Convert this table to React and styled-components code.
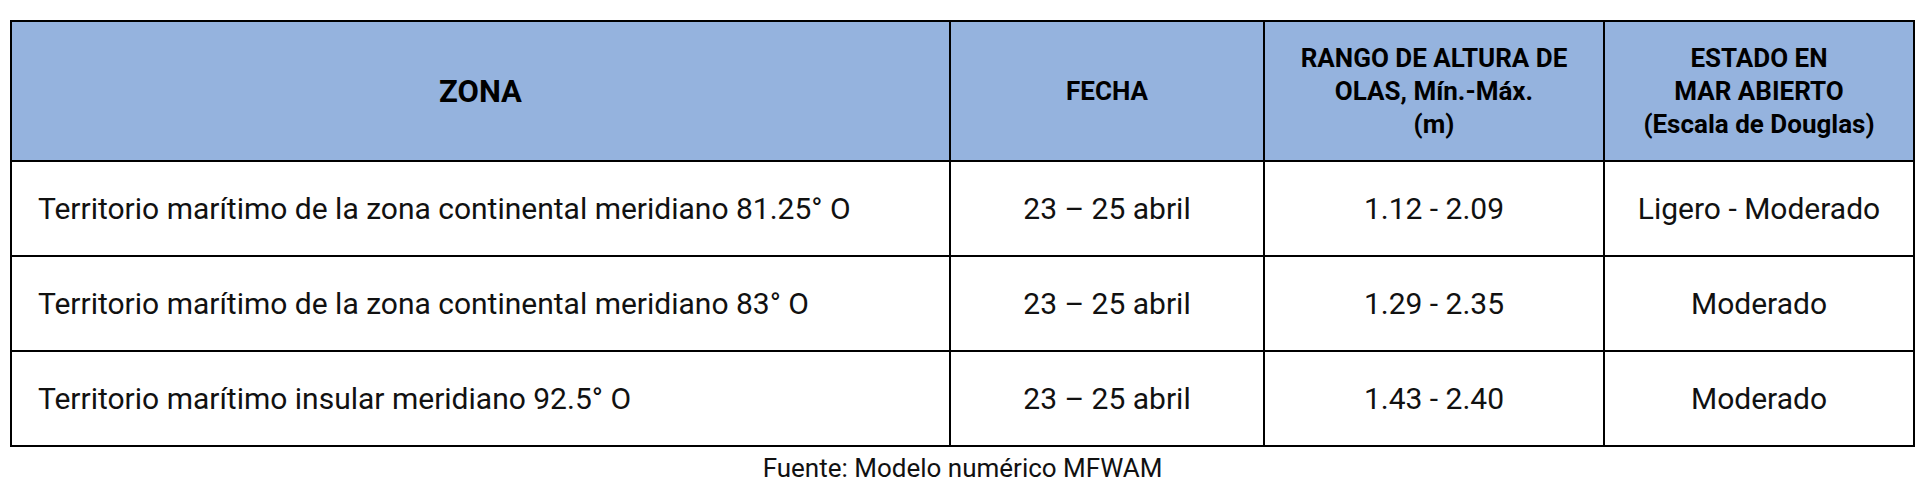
import React from 'react';
import styled, { createGlobalStyle } from 'styled-components';

const rows = [
  {
    zona: 'Territorio marítimo de la zona continental meridiano 81.25° O',
    fecha: '23 – 25 abril',
    rango: '1.12 - 2.09',
    estado: 'Ligero - Moderado',
  },
  {
    zona: 'Territorio marítimo de la zona continental meridiano 83° O',
    fecha: '23 – 25 abril',
    rango: '1.29 - 2.35',
    estado: 'Moderado',
  },
  {
    zona: 'Territorio marítimo insular meridiano 92.5° O',
    fecha: '23 – 25 abril',
    rango: '1.43 - 2.40',
    estado: 'Moderado',
  },
];

const GlobalStyle = createGlobalStyle`
  html, body {
    margin: 0;
    padding: 0;
    background: #ffffff;
  }
  body {
    font-family: Roboto, "Liberation Sans", sans-serif;
    color: #111111;
  }
`;

const App = () => (
  <Page>
    <GlobalStyle />
    <Grid>
      <HeadCell big>ZONA</HeadCell>
      <HeadCell>FECHA</HeadCell>
      <HeadCell>
        RANGO DE ALTURA DE
        <br />
        OLAS, Mín.-Máx.
        <br />
        (m)
      </HeadCell>
      <HeadCell>
        ESTADO EN
        <br />
        MAR ABIERTO
        <br />
        (Escala de Douglas)
      </HeadCell>
      {rows.map(row => (
        <React.Fragment key={row.zona}>
          <Cell align="left">{row.zona}</Cell>
          <Cell>{row.fecha}</Cell>
          <Cell>{row.rango}</Cell>
          <Cell>{row.estado}</Cell>
        </React.Fragment>
      ))}
    </Grid>
    <Source>Fuente: Modelo numérico MFWAM</Source>
  </Page>
);

const Page = styled.div`
  padding: 20px 0 0 10px;
  width: 1905px;
`;

const Grid = styled.div`
  display: grid;
  grid-template-columns: 937px 312px 338px 308px;
  grid-template-rows: 138px 93px 93px 93px;
  gap: 2px;
  padding: 2px;
  background: #000000;
`;

const HeadCell = styled.div`
  display: flex;
  align-items: center;
  justify-content: center;
  text-align: center;
  background: #95b3de;
  font-weight: 700;
  font-size: ${props => (props.big ? '31px' : '26px')};
  line-height: 33px;
  color: #000000;
`;

const Cell = styled.div`
  display: flex;
  align-items: center;
  justify-content: ${props => (props.align === 'left' ? 'flex-start' : 'center')};
  padding: ${props => (props.align === 'left' ? '0 0 0 26px' : '0')};
  background: #ffffff;
  font-size: 30px;
  color: #111111;
`;

const Source = styled.div`
  margin-top: 6px;
  text-align: center;
  font-size: 26px;
  line-height: 30px;
  color: #111111;
`;

export default App;
